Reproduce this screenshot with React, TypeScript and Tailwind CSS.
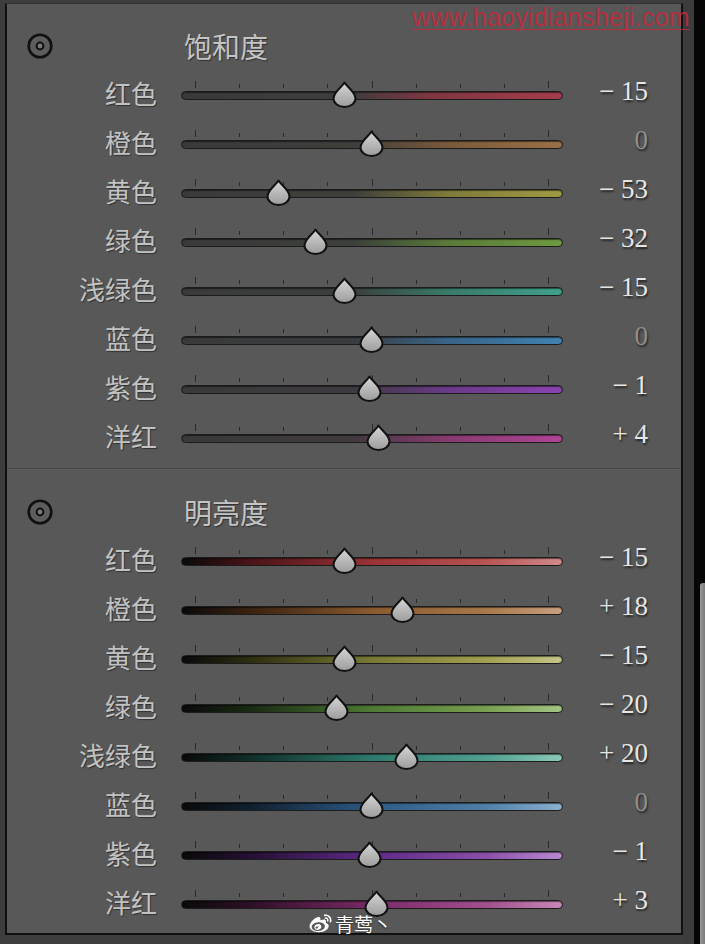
import { FaWeibo } from "react-icons/fa";

type Row = { label: string; value: number; track: string };

const saturation: Row[] = [
  { label: "红色", value: -15, track: "bg-[linear-gradient(to_right,#3a3a3a_0%,#403c3d_45%,#7e3642_65%,#a53d4b_100%)]" },
  { label: "橙色", value: 0, track: "bg-[linear-gradient(to_right,#3a3a3a_0%,#403e3b_45%,#7a5a3a_70%,#9a7046_100%)]" },
  { label: "黄色", value: -53, track: "bg-[linear-gradient(to_right,#3a3a3a_0%,#3f3f3a_45%,#7e7a3a_70%,#a09a42_100%)]" },
  { label: "绿色", value: -32, track: "bg-[linear-gradient(to_right,#3a3a3a_0%,#3c403a_45%,#5a7a3a_70%,#6e9a40_100%)]" },
  { label: "浅绿色", value: -15, track: "bg-[linear-gradient(to_right,#3a3a3a_0%,#3a403e_45%,#3a7a6a_70%,#40a08a_100%)]" },
  { label: "蓝色", value: 0, track: "bg-[linear-gradient(to_right,#3a3a3a_0%,#3a3d40_45%,#3a6488_70%,#4080b0_100%)]" },
  { label: "紫色", value: -1, track: "bg-[linear-gradient(to_right,#3a3a3a_0%,#3e3a40_45%,#6a3a88_70%,#8a44b0_100%)]" },
  { label: "洋红", value: 4, track: "bg-[linear-gradient(to_right,#3a3a3a_0%,#403a3e_45%,#883a70_70%,#b04494_100%)]" },
];

const luminance: Row[] = [
  { label: "红色", value: -15, track: "bg-[linear-gradient(to_right,#0a0a0a_0%,#4a1418_18%,#9a3236_50%,#b85454_80%,#d08a8a_100%)]" },
  { label: "橙色", value: 18, track: "bg-[linear-gradient(to_right,#0a0a0a_0%,#3a2210_18%,#8a5a30_50%,#a8784a_80%,#c8a080_100%)]" },
  { label: "黄色", value: -15, track: "bg-[linear-gradient(to_right,#0a0a0a_0%,#2e2e12_18%,#7a7a36_50%,#a0a050_80%,#c4c48a_100%)]" },
  { label: "绿色", value: -20, track: "bg-[linear-gradient(to_right,#0a0a0a_0%,#1a2a14_18%,#4e7a34_50%,#78a050_80%,#a4c486_100%)]" },
  { label: "浅绿色", value: 20, track: "bg-[linear-gradient(to_right,#0a0a0a_0%,#102e2a_18%,#2e7a6c_50%,#50a090_80%,#8cc8b8_100%)]" },
  { label: "蓝色", value: 0, track: "bg-[linear-gradient(to_right,#0a0a0a_0%,#10202e_18%,#2e5a86_50%,#5080a8_80%,#8cb0d0_100%)]" },
  { label: "紫色", value: -1, track: "bg-[linear-gradient(to_right,#0a0a0a_0%,#241034_18%,#5e2a86_50%,#8a50aa_80%,#b88ad0_100%)]" },
  { label: "洋红", value: 3, track: "bg-[linear-gradient(to_right,#0a0a0a_0%,#2e1026_18%,#7a2a68_50%,#a0508c_80%,#c888b8_100%)]" },
];

const ticks = [true, false, false, false, true, false, false, false, true];

function TargetIcon() {
  return (
    <svg width="26" height="26" viewBox="0 0 26 26">
      <circle cx="13" cy="13" r="11.3" fill="#5d5d5d" stroke="#101010" strokeWidth="2.6" />
      <circle cx="13" cy="13" r="3.4" fill="#7a7a7a" stroke="#101010" strokeWidth="2" />
    </svg>
  );
}

function Thumb() {
  return (
    <svg width="27" height="27" viewBox="0 0 27 27">
      <defs>
        <linearGradient id="thumbFill" x1="0" y1="0" x2="0" y2="1">
          <stop offset="0" stopColor="#d6d6d6" />
          <stop offset="1" stopColor="#9c9c9c" />
        </linearGradient>
      </defs>
      <path
        d="M13.5 1.5 C16 6 24.5 11 24.5 17.5 A11 8.5 0 0 1 2.5 17.5 C2.5 11 11 6 13.5 1.5 Z"
        fill="url(#thumbFill)"
        stroke="#111"
        strokeWidth="2"
        strokeLinejoin="round"
      />
    </svg>
  );
}

function SliderRow({ label, value, track }: Row) {
  const center = 190.3 + value * 1.755;
  const text = value === 0 ? "0" : value > 0 ? `+ ${value}` : `− ${Math.abs(value)}`;
  return (
    <div className="flex h-[49px]">
      <div className="w-[150px] pt-[10px] text-right text-[26px] leading-[26px] text-[#c2c2c2] [font-family:'Noto_Sans_CJK_SC',sans-serif] [text-shadow:1px_1px_1px_rgba(0,0,0,0.45)]">
        {label}
      </div>
      <div className="relative ml-[24px] w-[382px]">
        <div className="mx-[14px] mt-[11px] flex h-[7px] items-end justify-between">
          {ticks.map((tall, i) => (
            <div key={i} className={`w-px bg-[#2a2a2a] ${tall ? "h-[7px]" : "h-[4px]"}`} />
          ))}
        </div>
        <div
          className={`mt-[3px] h-[9px] rounded-full border border-[#1c1c1c] shadow-[inset_0_1px_1px_rgba(0,0,0,0.5)] ${track}`}
        />
        <div className="absolute top-[11px]" style={{ left: center - 13.5 }}>
          <Thumb />
        </div>
      </div>
      <div
        className={`w-[85px] pt-[8px] text-right text-[27px] leading-[27px] [font-family:'Liberation_Serif',serif] [text-shadow:1px_2px_2px_rgba(0,0,0,0.6)] ${
          value === 0 ? "text-[#8e8e8e]" : "text-[#e6e6e6]"
        }`}
      >
        {text}
      </div>
    </div>
  );
}

function Section({ title, rows }: { title: string; rows: Row[] }) {
  return (
    <div>
      <div className="mt-[29px] mb-[11px] flex h-[26px] items-center pl-[20px]">
        <TargetIcon />
        <span className="ml-[131px] text-[28px] leading-[28px] text-[#c4c4c4] [font-family:'Noto_Sans_CJK_SC',sans-serif] [text-shadow:1px_1px_1px_rgba(0,0,0,0.45)]">
          {title}
        </span>
      </div>
      {rows.map((r) => (
        <SliderRow key={title + r.label} {...r} />
      ))}
    </div>
  );
}

export default function App() {
  return (
    <div className="relative flex h-[944px] w-[705px] overflow-hidden bg-[#3e3e3e]">
      <div className="w-[5px] bg-[#3d3d3d]" />
      <div className="mt-[3px] h-[932px] w-[678px] border-x-2 border-t border-b-2 border-x-[#111] border-t-[#333] border-b-[#111] bg-[#585858]">
        <Section title="饱和度" rows={saturation} />
        <div className="mt-[6px] h-[2px] border-t border-b border-t-[#454545] border-b-[#5f5f5f]" />
        <Section title="明亮度" rows={luminance} />
      </div>
      <div className="w-[11px] bg-[#3c3c3c]" />
      <div className="relative w-[11px] bg-[#060606]">
        <div className="absolute top-[583px] right-0 bottom-0 w-[5px] rounded-tl-[3px] bg-[linear-gradient(to_right,#9a9a9a,#7a7a7a)]" />
      </div>

      <div className="absolute top-[3px] left-[412px] text-[25px] leading-[28px] tracking-[0.25px] text-[#c4283a]/85 underline decoration-1 underline-offset-[3px] [font-family:'Liberation_Sans',sans-serif]">
        www.haoyidiansheji.com
      </div>

      <div className="absolute top-[912px] left-[309px] flex items-center gap-[3px] text-white [text-shadow:0_1px_2px_rgba(0,0,0,0.6)]">
        <FaWeibo className="h-[22px] w-[23px]" />
        <span className="text-[19px] leading-[24px] [font-family:'Noto_Sans_CJK_SC',sans-serif]">青莺丶</span>
      </div>
    </div>
  );
}
